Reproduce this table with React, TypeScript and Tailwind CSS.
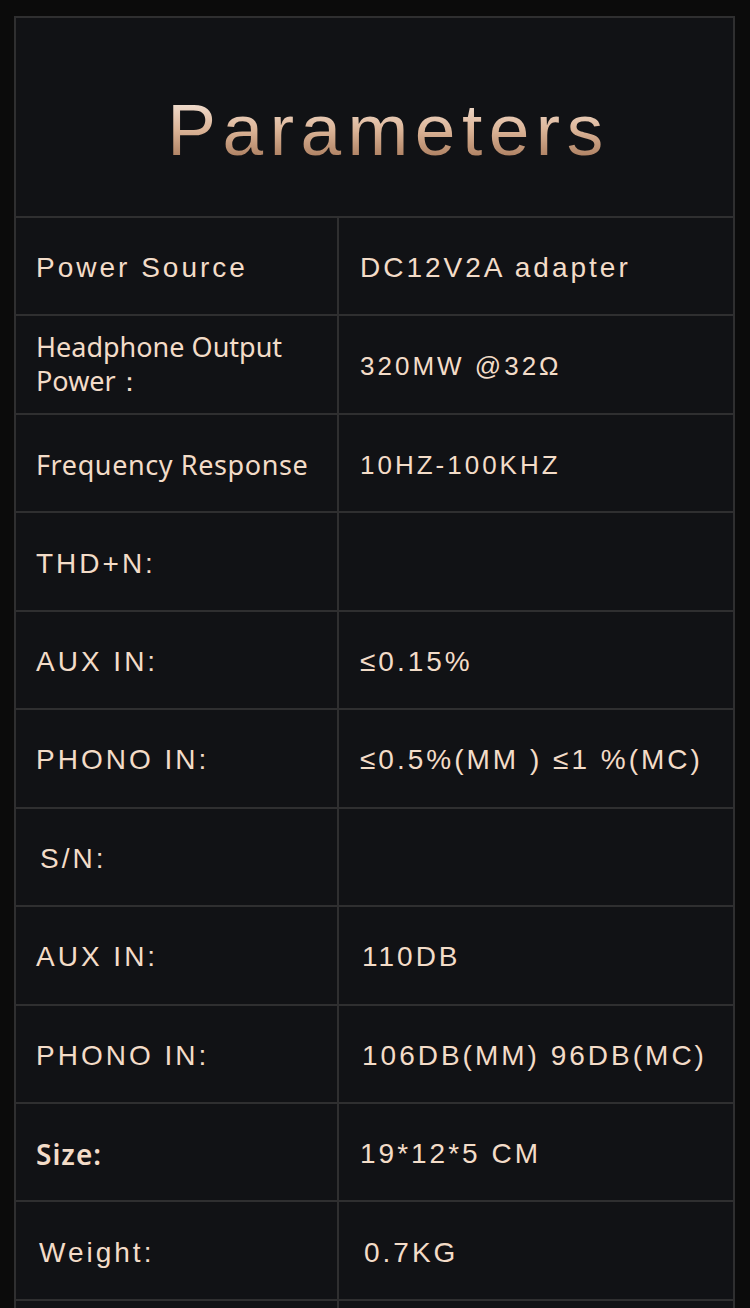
const arial = "font-['Liberation_Sans',Arial,sans-serif]";

type Cell = { text: string; cls?: string };
type Row = { label: Cell; value: Cell };

const base = `${arial} text-[28px] tracking-[3px]`;
const noto = "font-['Noto_Sans',sans-serif] text-[27px] leading-[34px]";

const rows: Row[] = [
  { label: { text: "Power Source", cls: `${base} tracking-[3.3px]` }, value: { text: "DC12V2A adapter", cls: base } },
  {
    label: { text: "Headphone Output\nPower：", cls: `${noto} -mt-[6px]` },
    value: { text: "320MW @32Ω", cls: `${arial} text-[26px] tracking-[3px]` },
  },
  {
    label: { text: "Frequency Response", cls: `${noto} tracking-[0.6px]` },
    value: { text: "10HZ-100KHZ", cls: `${arial} text-[26px] tracking-[3px]` },
  },
  { label: { text: "THD+N:", cls: `${base} tracking-[3.6px]` }, value: { text: "" } },
  { label: { text: "AUX IN:", cls: base }, value: { text: "≤0.15%", cls: base } },
  { label: { text: "PHONO IN:", cls: base }, value: { text: "≤0.5%(MM ) ≤1 %(MC)", cls: `${base} tracking-[2.4px]` } },
  { label: { text: "S/N:", cls: `${base} pl-[4px]` }, value: { text: "" } },
  { label: { text: "AUX IN:", cls: base }, value: { text: "110DB", cls: `${base} pl-[2px]` } },
  { label: { text: "PHONO IN:", cls: base }, value: { text: "106DB(MM) 96DB(MC)", cls: `${base} pl-[2px]` } },
  {
    label: { text: "Size:", cls: "font-['Noto_Sans',sans-serif] font-semibold text-[28px] tracking-[1px]" },
    value: { text: "19*12*5 CM", cls: `${base} tracking-[1.5px]` },
  },
  { label: { text: "Weight:", cls: `${base} pl-[3px] tracking-[3.6px]` }, value: { text: "0.7KG", cls: `${base} pl-[4px]` } },
  { label: { text: "" }, value: { text: "" } },
];

export default function App() {
  return (
    <div className="h-[1308px] overflow-hidden bg-[#0b0b0b] pt-[16px] pl-[14px] pr-[15px]">
      <div className="border-x-2 border-t-2 border-[#2f2f30] bg-[#111215]">
        {/* Title */}
        <div className="h-[198px] flex items-center justify-center pt-[24px]">
          <h1 className="font-['Liberation_Sans',Arial,sans-serif] text-[73px] leading-none tracking-[6.5px] pl-[28px] bg-gradient-to-b from-[#f7ebe2] via-[#dcb598] to-[#a07152] bg-clip-text text-transparent">
            Parameters
          </h1>
        </div>

        {/* Spec rows */}
        {rows.map((row, i) => (
          <div key={i} className="flex h-[98.45px] border-t-2 border-[#2f2f30] text-[#f3dcc8]">
            <div className="w-[323px] shrink-0 border-r-2 border-[#2f2f30] flex items-center pl-[20px] pt-[4px]">
              <span className={`${row.label.cls ?? ""} whitespace-pre-line`}>{row.label.text}</span>
            </div>
            <div className="flex-1 flex items-center pl-[21px] pt-[4px]">
              <span className={`${row.value.cls ?? ""} whitespace-nowrap`}>{row.value.text}</span>
            </div>
          </div>
        ))}
      </div>
    </div>
  );
}
